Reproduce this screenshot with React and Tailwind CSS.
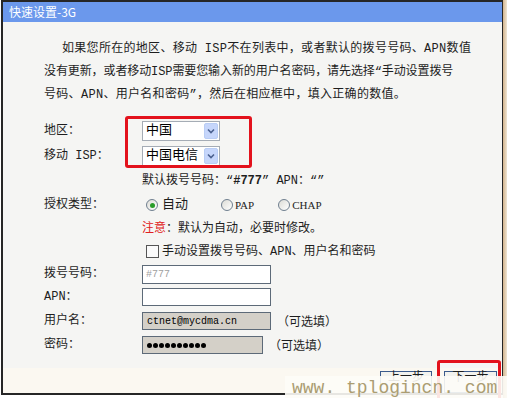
import React from "react";

// select box with XP style arrow button
const Select = ({ value }) => (
  <div className="flex h-[20px] w-[78px] items-center border border-[#a5acb5] bg-white">
    <span className="flex-1 pl-[3px] text-[13px] leading-none text-black">{value}</span>
    <span className="mr-px flex h-[16px] w-[14px] items-center justify-center rounded-[2px] border border-[#b9cdf5] bg-[#c6d6fb]">
      <svg width="8" height="6" viewBox="0 0 8 6">
        <path d="M1 1.5 L4 4.5 L7 1.5" fill="none" stroke="#4b6190" strokeWidth="1.6" />
      </svg>
    </span>
  </div>
);

const Radio = ({ checked }) => (
  <span className="flex h-[12px] w-[12px] items-center justify-center rounded-full border border-[#6f7f8f] bg-gradient-to-br from-[#dcdcd6] to-white">
    {checked && <span className="h-[5px] w-[5px] rounded-full bg-[#2a9c2a]" />}
  </span>
);

const Row = ({ h, label, children }) => (
  <div className={"flex items-center " + h}>
    <div className="w-[98px] shrink-0">{label}</div>
    <div className="flex items-center">{children}</div>
  </div>
);

const App = () => {
  return (
    <div className="relative h-[398px] w-[507px] overflow-hidden bg-white font-['Liberation_Mono','Noto_Sans_CJK_SC',monospace] text-[12px] text-[#1e1e1e]">
      <div className="flex">
        <div className="ml-px flex h-[395px] w-[502px] flex-col border-b-2 border-l-2 border-r border-t-2 border-[#262626] bg-[#f5f5f3]">
          <div className="h-[20px] bg-[#6b98ec] pl-[6px] text-[12px] leading-[20px] text-white font-['Noto_Sans_CJK_SC',sans-serif]">
            快速设置-3G
          </div>

          <div className="whitespace-nowrap pl-[41px] pt-[16px] leading-[23px]">
            <div className="ml-[18px] w-[393px] tracking-[0.3px]">
              如果您所在的地区、移动 ISP不在列表中，或者默认的拨号号码、APN数值
            </div>
            <div className="w-[411px] tracking-[-0.1px]">
              没有更新，或者移动ISP需要您输入新的用户名密码，请先选择“手动设置拨号
            </div>
            <div className="tracking-[0.3px]">号码、APN、用户名和密码”，然后在相应框中，填入正确的数值。</div>
          </div>

          <div className="mt-[11px] pl-[41px]">
            <Row h="h-[25px]" label="地区：">
              <Select value="中国" />
            </Row>
            <Row h="h-[25px]" label="移动 ISP：">
              <Select value="中国电信" />
            </Row>
            <Row h="h-[25px]" label="">
              <span>
                默认拨号号码：“<b>#777</b>” APN：“”
              </span>
            </Row>
            <Row h="h-[24px]" label="授权类型：">
              <div className="flex items-center pl-[4px]">
                <Radio checked />
                <span className="ml-[4px] text-[13px]">自动</span>
                <span className="ml-[33px]"><Radio /></span>
                <span className="ml-[2px] text-[11px] font-['Liberation_Serif',serif]">PAP</span>
                <span className="ml-[24px]"><Radio /></span>
                <span className="ml-[2px] text-[11px] font-['Liberation_Serif',serif]">CHAP</span>
              </div>
            </Row>
            <Row h="h-[23px]" label="">
              <span>
                <span className="text-[#e02020]">注意</span>：默认为自动，必要时修改。
              </span>
            </Row>
            <Row h="h-[23px]" label="">
              <div className="flex items-center pl-[4px]">
                <span className="h-[13px] w-[13px] border border-[#555] bg-[#fafafa]" />
                <span className="ml-[3px]">手动设置拨号号码、APN、用户名和密码</span>
              </div>
            </Row>
            <Row h="h-[22px]" label="拨号号码：">
              <div className="flex h-[19px] w-[129px] items-center border border-[#5d6a78] bg-white pl-[3px] text-[10px] text-[#a0a0a0]">
                #777
              </div>
            </Row>
            <Row h="h-[24px]" label="APN：">
              <div className="h-[18px] w-[129px] border border-[#5d6a78] bg-white" />
            </Row>
            <Row h="h-[24px]" label="用户名：">
              <div className="flex h-[18px] w-[129px] items-center border border-[#5d6a78] bg-[#d4d0c8] pl-[4px] text-[10px] text-black">
                ctnet@mycdma.cn
              </div>
              <span className="ml-[6px] font-['Noto_Sans_CJK_SC',sans-serif]">（可选填）</span>
            </Row>
            <Row h="h-[24px]" label="密码：">
              <div className="flex h-[18px] w-[121px] items-center gap-px border border-[#5d6a78] bg-[#d4d0c8] pl-[4px]">
                {Array.from({ length: 10 }).map((_, i) => (
                  <span key={i} className="h-[5px] w-[5px] rounded-full bg-black" />
                ))}
              </div>
              <span className="ml-[6px] font-['Noto_Sans_CJK_SC',sans-serif]">（可选填）</span>
            </Row>
          </div>

          <div className="mt-[11px] h-px bg-[#c9b98d]" />
          <div className="flex flex-1 items-start justify-end gap-[12px] bg-[#fbf8f1] pr-[5px] pt-[3px]">
            <button className="h-[22px] w-[52px] border border-[#3a5a8c] bg-[#f2f2ee] pb-[8px] text-[12px] leading-[10px]">上一步</button>
            <button className="h-[22px] w-[53px] border border-[#3a5a8c] bg-[#f2f2ee] pb-[8px] text-[12px] leading-[10px]">下一步</button>
          </div>
        </div>
        <div className="h-[398px] w-[4px] bg-gradient-to-r from-[#d2b48e] to-[#efe4d2]" />
      </div>

      {/* red highlight boxes */}
      <div className="absolute left-[125px] top-[116px] h-[52px] w-[127px] rounded-[3px] border-[3px] border-[#e3121c]" />
      <div className="absolute left-[437px] top-[360px] h-[44px] w-[64px] rounded-[3px] border-[3px] border-[#e3121c]" />

      {/* watermark */}
      <div className="absolute left-[285px] top-[376px] h-[22px] w-[222px] bg-[#fdfcf7]/90 pl-[7px] text-[18px] leading-[24px] text-[#ab9d72] font-['Liberation_Mono',monospace]">
        www. tplogincn. com
      </div>
    </div>
  );
};

export default App;
